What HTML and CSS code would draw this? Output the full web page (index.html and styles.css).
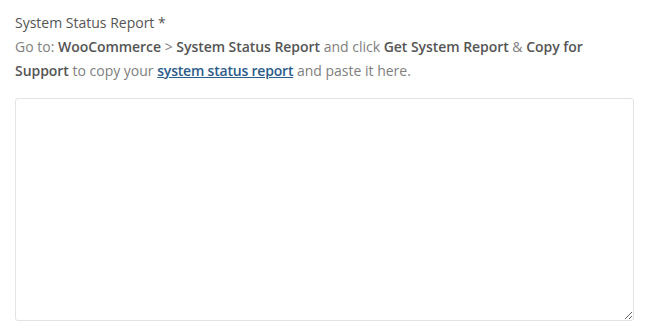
FILE: index.html
```html
<!DOCTYPE html>
<html lang="en">

<head>
    <meta charset="UTF-8">
    <meta name="viewport" content="width=device-width, initial-scale=1.0">
    <title>System Status Report</title>
    <link rel="stylesheet" href="styles.css">
</head>

<body>
    <!-- Campo do relatório -->
    <div class="field">
        <label class="field-label" for="ssr">System Status Report <span class="required">*</span></label>
        <p class="field-help">Go to: <strong>WooCommerce</strong> &gt; <strong>System Status Report</strong> and click <strong>Get System Report</strong> &amp; <strong>Copy for Support</strong> to copy your <a href="#">system status report</a> and paste it here.</p>
        <textarea id="ssr" class="field-input"></textarea>
    </div>
</body>

</html>
```

FILE: styles.css
```css
body {
    font-family: "Open Sans", Arial, sans-serif;
    margin: 0;
    padding: 0 16px 0 15px;
    background-color: #fff;
    color: #808080;
}

.field {
    display: flex;
    flex-direction: column;
    padding-top: 11px;
}

.field-label {
    font-size: 14px;
    line-height: 24px;
    color: #555;
}

.field-help {
    margin: 0;
    padding-right: 10px;
    font-size: 14px;
    line-height: 24px;
    color: #808080;
}

.field-help strong {
    color: #555;
    font-weight: 600;
    letter-spacing: -0.05px;
}

.field-help a {
    color: #2b5c8a;
    font-weight: 600;
    letter-spacing: -0.2px;
}

.field-input {
    margin-top: 15px;
    height: 223px;
    box-sizing: border-box;
    border: 1px solid #e3e3e3;
    border-radius: 3px;
    font-family: inherit;
}
```
